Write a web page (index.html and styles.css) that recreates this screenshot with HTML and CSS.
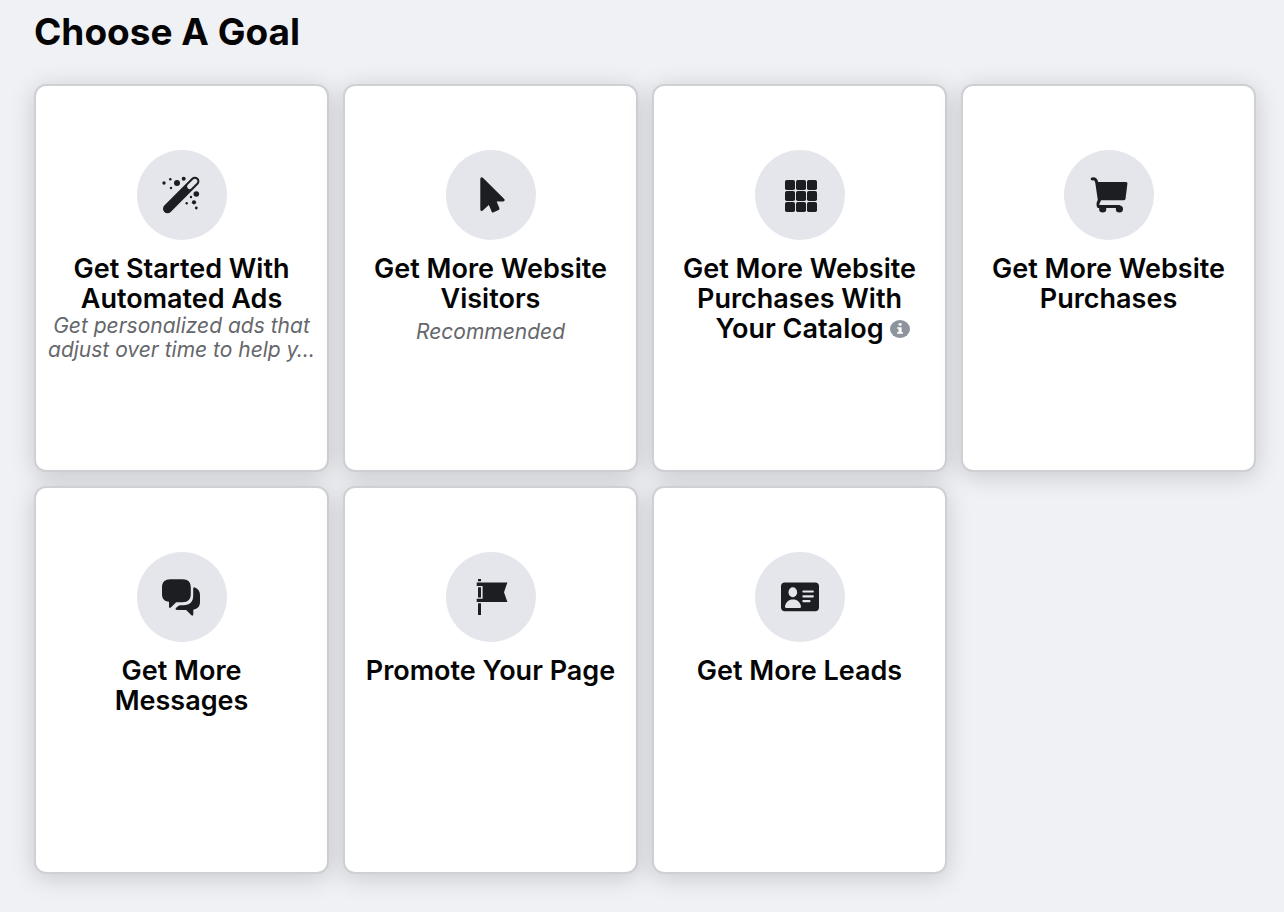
FILE: index.html
```html
<!DOCTYPE html>
<html lang="en">
<head>
    <meta charset="UTF-8">
    <meta name="viewport" content="width=device-width, initial-scale=1.0">
    <title>Choose A Goal</title>
    <link rel="stylesheet" href="styles.css">
</head>
<body>
    <h1>Choose A Goal</h1>

    <div class="goals">
        <button type="button" class="goal">
            <span class="goal-icon">
                <svg viewBox="0 0 40 40" aria-hidden="true">
                    <path class="wand" d="M5.5 33.8L32.9 6.3"/>
                    <path class="wand-tip" d="M27.6 11.6L32.9 6.3"/>
                    <circle cx="2" cy="8" r="1.7"/>
                    <circle cx="8.3" cy="4.3" r="1.3"/>
                    <circle cx="15" cy="8" r="3"/>
                    <circle cx="21.7" cy="3.7" r="2"/>
                    <circle cx="9" cy="13" r="1.2"/>
                    <circle cx="34.3" cy="19" r="2.8"/>
                    <circle cx="29" cy="22" r="1.2"/>
                    <circle cx="24.7" cy="28.3" r="1.2"/>
                    <circle cx="32" cy="27.3" r="2.1"/>
                    <circle cx="34.3" cy="33" r="1.4"/>
                </svg>
            </span>
            <span class="goal-title">Get Started With Automated Ads</span>
            <span class="goal-text">Get personalized ads that adjust over time to help y…</span>
        </button>

        <button type="button" class="goal">
            <span class="goal-icon">
                <svg viewBox="0 0 40 40" aria-hidden="true">
                    <path class="rounded" d="M10.8 3.8L32.2 25H23.4L27 33.6L22 36L18.4 27.4L10.8 34.5Z"/>
                </svg>
            </span>
            <span class="goal-title">Get More Website Visitors</span>
            <span class="goal-text goal-tag">Recommended</span>
        </button>

        <button type="button" class="goal">
            <span class="goal-icon">
                <svg viewBox="0 0 40 40" aria-hidden="true">
                    <rect x="5" y="5" width="10" height="10" rx="1.8"/>
                    <rect x="16" y="5" width="10" height="10" rx="1.8"/>
                    <rect x="27" y="5" width="10" height="10" rx="1.8"/>
                    <rect x="5" y="16" width="10" height="10" rx="1.8"/>
                    <rect x="16" y="16" width="10" height="10" rx="1.8"/>
                    <rect x="27" y="16" width="10" height="10" rx="1.8"/>
                    <rect x="5" y="27" width="10" height="10" rx="1.8"/>
                    <rect x="16" y="27" width="10" height="10" rx="1.8"/>
                    <rect x="27" y="27" width="10" height="10" rx="1.8"/>
                </svg>
            </span>
            <span class="goal-title">Get More Website Purchases With <span class="with-info">Your Catalog<svg class="info" viewBox="0 0 20 20" role="img" aria-label="More information"><ellipse cx="10" cy="10" rx="10" ry="9"/><path d="M8.6 4.2h3v2.4h-3zM7.2 8.2h4.4v5h1.4v1.6H7v-1.6h1.6V9.8H7.2z"/></svg></span></span>
        </button>

        <button type="button" class="goal">
            <span class="goal-icon">
                <svg viewBox="0 0 40 40" aria-hidden="true">
                    <path class="line" d="M3.2 3.9C6.6 3.5 7.3 4.8 7.8 8L10.4 25.5C8.6 27.5 8.6 29 9.4 31.6H30"/>
                    <path d="M7 6.9H37Q38.6 6.9 38.4 8.6L36.6 23.4Q36.3 25.3 34.4 25.3H9.8Z"/>
                    <circle cx="13.7" cy="34" r="3.6"/>
                    <circle cx="30.4" cy="34" r="3.6"/>
                </svg>
            </span>
            <span class="goal-title">Get More Website Purchases</span>
        </button>

        <button type="button" class="goal">
            <span class="goal-icon">
                <svg viewBox="0 0 40 40" aria-hidden="true">
                    <path d="M8.5 2.3H20.5C26 2.3 28.8 5.2 28.8 10.5V17C28.8 22.4 26 25.2 20.5 25.2H14.2L8.8 30.6Q7.2 31.6 7 29.8V24.8C2.4 24.4 0 21.8 0 17V10.5C0 5.2 3 2.3 8.5 2.3Z"/>
                    <path d="M31.2 11.4Q31.4 10 32.8 10.5C36.4 12 38 14.4 38 18V25C38 29.4 35.6 32 31.3 32.7V37.6Q31 39.3 29.4 38.2L24.2 33H15.4C13.4 33 13 31.6 14.2 30.7L16.6 28.8Q17.2 28.2 18.4 28.2H21.5C28 28.2 31.2 25 31.2 18.6Z"/>
                </svg>
            </span>
            <span class="goal-title">Get More Messages</span>
        </button>

        <button type="button" class="goal">
            <span class="goal-icon">
                <svg viewBox="0 0 40 40" aria-hidden="true">
                    <path d="M7 2h3v2.2H7zM7 10.2h3v10.4H7zM7 26.2h3V38H7z"/>
                    <path d="M5.7 5.6H36.4L33 15.2L36.4 25H5.7V21.8H11.6V9H5.7Z"/>
                </svg>
            </span>
            <span class="goal-title">Promote Your Page</span>
        </button>

        <button type="button" class="goal">
            <span class="goal-icon">
                <svg viewBox="0 0 40 40" aria-hidden="true">
                    <rect x="1" y="5.4" width="38" height="28.8" rx="4"/>
                    <g class="cutout">
                        <ellipse cx="12.8" cy="15.3" rx="4.3" ry="5"/>
                        <path d="M6 31Q4.8 31 5 29.6C5.6 25 8.6 22.4 13 22.4S20.4 25 21 29.6Q21.2 31 20 31Z"/>
                        <rect x="22.3" y="13.4" width="11.6" height="2.2" rx="1.1"/>
                        <rect x="22.3" y="18.3" width="11.6" height="2.2" rx="1.1"/>
                        <rect x="22.3" y="23.1" width="8.3" height="2.2" rx="1.1"/>
                    </g>
                </svg>
            </span>
            <span class="goal-title">Get More Leads</span>
        </button>
    </div>
</body>
</html>
```

FILE: styles.css
```css
body {
    font-family: Inter, "Liberation Sans", sans-serif;
    margin: 0;
    padding: 8px 28px 38px 34px;
    background-color: #f0f1f5;
    color: #050505;
}
h1 {
    margin: 0 0 28px;
    font-size: 37px;
    line-height: 48px;
    font-weight: 700;
}
.goals {
    display: grid;
    grid-template-columns: repeat(4, 1fr);
    gap: 14px;
}
.goal {
    display: flex;
    flex-direction: column;
    align-items: center;
    min-height: 388px;
    padding: 64px 4px 20px;
    border: 2px solid #ced0d4;
    border-radius: 12px;
    background-color: white;
    box-shadow: 0 4px 24px rgba(0, 0, 0, 0.17);
    color: inherit;
    font-family: inherit;
    text-align: center;
    cursor: pointer;
}
.goal-icon {
    display: flex;
    align-items: center;
    justify-content: center;
    width: 90px;
    height: 90px;
    margin-bottom: 14px;
    border-radius: 50%;
    background-color: #e4e6eb;
}
.goal-icon svg {
    width: 40px;
    height: 40px;
    fill: #1c1e21;
}
.goal-icon .wand {
    stroke: #1c1e21;
    stroke-width: 9;
    stroke-linecap: round;
}
.goal-icon .wand-tip {
    stroke: #e4e6eb;
    stroke-width: 5;
    stroke-linecap: round;
}
.goal-icon .rounded {
    stroke: #1c1e21;
    stroke-width: 3;
    stroke-linejoin: round;
}
.goal-icon .line {
    fill: none;
    stroke: #1c1e21;
    stroke-width: 3;
    stroke-linecap: round;
    stroke-linejoin: round;
}
.goal-icon .cutout {
    fill: #e4e6eb;
}
.goal-title {
    max-width: 256px;
    font-size: 27px;
    line-height: 30px;
    font-weight: 600;
}
.goal-text {
    color: #65676b;
    font-size: 21px;
    line-height: 24px;
    font-style: italic;
}
.goal-tag {
    margin-top: 6px;
}
/* left padding balances the icon so the words stay centered */
.with-info {
    padding-left: 26px;
    white-space: nowrap;
}
.info {
    width: 20px;
    height: 20px;
    margin-left: 6px;
    vertical-align: -1px;
    fill: #8d949e;
}
.info path {
    fill: white;
}
```
